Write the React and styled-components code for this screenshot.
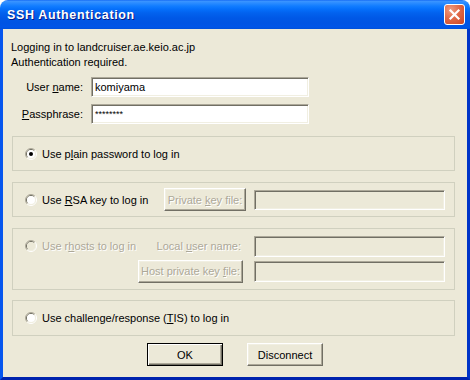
import React from 'react';
import styled, { createGlobalStyle, css } from 'styled-components';

const FACE = '#ECE9D8';
const SHADOW = '#ACA899';
const DARK = '#716F64';
const LIGHT = '#F1EFE2';

const GlobalStyle = createGlobalStyle`
  html, body { margin: 0; padding: 0; background: #fff; }
  body { font-family: "Liberation Sans", Arial, sans-serif; font-size: 11px; color: #000; }
`;

const Window = styled.div`
  width: 470px;
  height: 380px;
  display: flex;
  flex-direction: column;
  border-radius: 8px 8px 0 0;
  overflow: hidden;
`;

const TitleBar = styled.div`
  height: 29px;
  flex-shrink: 0;
  display: flex;
  align-items: center;
  justify-content: space-between;
  padding: 0 5px 0 7px;
  box-sizing: border-box;
  background: linear-gradient(to bottom,
    #0A5FF0 0px, #3D95FF 1px, #2B8CFF 3px, #127DFF 6px, #0570FB 9px,
    #0262EE 13px, #0058E6 18px, #0054E3 23px, #0055E8 27px, #0050DA 29px);
`;

const Title = styled.span`
  color: #fff;
  font-family: "Liberation Sans", Arial, sans-serif;
  font-weight: bold;
  font-size: 12.5px;
  letter-spacing: 0.65px;
  text-shadow: 1px 1px #0A1883;
  margin-top: 1px;
`;

const CloseBtn = styled.div`
  width: 21px;
  height: 21px;
  box-sizing: border-box;
  border: 1px solid #fff;
  border-radius: 3px;
  background: radial-gradient(circle at 30% 25%, #EE9C80 0%, #E06A48 45%, #CC4422 100%);
  display: flex;
  align-items: center;
  justify-content: center;
`;

const Frame = styled.div`
  flex: 1;
  display: flex;
  flex-direction: column;
  background: ${FACE};
  border-left: 3px solid #0656EE;
  border-right: 3px solid #0034C8;
  border-bottom: 3px solid #0023AE;
  padding: 11px 12px 0 8px;
`;

const Info = styled.div`
  line-height: 15px;
`;

const Credentials = styled.div`
  margin-top: 7px;
  display: grid;
  grid-template-columns: 72px 218px;
  grid-auto-rows: 20px;
  column-gap: 8px;
  row-gap: 7px;
  align-items: center;
`;

const Label = styled.span`
  text-align: ${p => (p.$right ? 'right' : 'left')};
  white-space: nowrap;
  ${p => p.$disabled && css`
    color: ${SHADOW};
    text-shadow: 1px 1px #fff;
  `}
`;

const Field = styled.div`
  height: ${p => p.$h || 20}px;
  box-sizing: border-box;
  border: 1px solid;
  border-color: ${SHADOW} #fff #fff ${SHADOW};
  box-shadow: inset 1px 1px ${DARK}, inset -1px -1px ${LIGHT};
  background: ${p => (p.$disabled ? FACE : '#fff')};
  padding: 0 3px;
  display: flex;
  align-items: center;
  font-size: ${p => (p.$small ? '9px' : '11px')};
`;

const Group = styled.div`
  margin: ${p => p.$top}px 0 0 1px;
  height: ${p => p.$h}px;
  box-sizing: border-box;
  border: 1px solid #D0D0BF;
  padding: 0 9px 0 12px;
  display: grid;
  grid-template-columns: ${p => p.$cols || '1fr'};
  column-gap: ${p => p.$gap || 0}px;
  row-gap: 3px;
  align-items: center;
  align-content: center;
`;

const Choice = styled.div`
  display: flex;
  align-items: center;
  gap: 5px;
  white-space: nowrap;
  min-width: 0;
`;

const Push = styled.div`
  height: 23px;
  box-sizing: border-box;
  display: flex;
  align-items: center;
  justify-content: center;
  white-space: nowrap;
  background: ${FACE};
  ${p => p.$default
    ? css`
      border: 1px solid #000;
      box-shadow: inset 1px 1px #fff, inset -1px -1px ${DARK}, inset -2px -2px ${SHADOW};
    `
    : css`
      border: 1px solid;
      border-color: #fff ${DARK} ${DARK} #fff;
      box-shadow: inset -1px -1px ${SHADOW}, inset 1px 1px ${LIGHT};
    `}
  ${p => p.$disabled && css`
    color: ${SHADOW};
    text-shadow: 1px 1px #fff;
  `}
  ${p => p.$width && css`width: ${p.$width}px;`}
`;

const ButtonRow = styled.div`
  margin-top: 7px;
  display: flex;
  justify-content: center;
  gap: 24px;
  padding-left: 4px;
`;

const Radio = ({ checked, disabled }) => (
  <svg width="12" height="12" viewBox="0 0 12 12" style={{ flexShrink: 0 }}>
    <path d="M2.1 9.9 A5.5 5.5 0 0 1 9.9 2.1" fill="none" stroke={SHADOW} />
    <path d="M9.9 2.1 A5.5 5.5 0 0 1 2.1 9.9" fill="none" stroke="#fff" />
    <path d="M2.8 9.2 A4.5 4.5 0 0 1 9.2 2.8" fill="none" stroke={DARK} />
    <path d="M9.2 2.8 A4.5 4.5 0 0 1 2.8 9.2" fill="none" stroke={LIGHT} />
    <circle cx="6" cy="6" r="4" fill={disabled ? FACE : '#fff'} />
    {checked && <circle cx="6" cy="6" r="2" fill="#000" />}
  </svg>
);

export default function App() {
  return (
    <>
      <GlobalStyle />
      <Window>
        <TitleBar>
          <Title>SSH Authentication</Title>
          <CloseBtn>
            <svg width="13" height="13" viewBox="0 0 13 13">
              <path d="M2.5 2.5 L10.5 10.5 M10.5 2.5 L2.5 10.5" stroke="#fff" strokeWidth="2.2" strokeLinecap="square" />
            </svg>
          </CloseBtn>
        </TitleBar>

        <Frame>
          <Info>
            Logging in to landcruiser.ae.keio.ac.jp<br />
            Authentication required.
          </Info>

          <Credentials>
            <Label $right>User <u>n</u>ame:</Label>
            <Field>komiyama</Field>
            <Label $right><u>P</u>assphrase:</Label>
            <Field $small>********</Field>
          </Credentials>

          <Group $top={12} $h={35}>
            <Choice>
              <Radio checked />
              <span>Use p<u>l</u>ain password to log in</span>
            </Choice>
          </Group>

          <Group $top={11} $h={35} $cols="minmax(0, 1fr) 82px 191px" $gap={8}>
            <Choice>
              <Radio />
              <span>Use <u>R</u>SA key to log in</span>
            </Choice>
            <Push $disabled><span>Private <u>k</u>ey file:</span></Push>
            <Field $disabled />
          </Group>

          <Group $top={11} $h={62} $cols="minmax(0, 1fr) 105px 191px" $gap={11}>
            <Choice>
              <Radio disabled />
              <Label $disabled>Use r<u>h</u>osts to log in</Label>
            </Choice>
            <Label $right $disabled style={{ paddingRight: 2 }}>Local <u>u</u>ser name:</Label>
            <Field $disabled $h={21} />
            <span />
            <Push $disabled><span>Host private key <u>f</u>ile:</span></Push>
            <Field $disabled $h={21} />
          </Group>

          <Group $top={10} $h={36}>
            <Choice>
              <Radio />
              <span>Use challenge/response (<u>T</u>IS) to log in</span>
            </Choice>
          </Group>

          <ButtonRow>
            <Push $default $width={76}>OK</Push>
            <Push $width={76}>Disconnect</Push>
          </ButtonRow>
        </Frame>
      </Window>
    </>
  );
}
